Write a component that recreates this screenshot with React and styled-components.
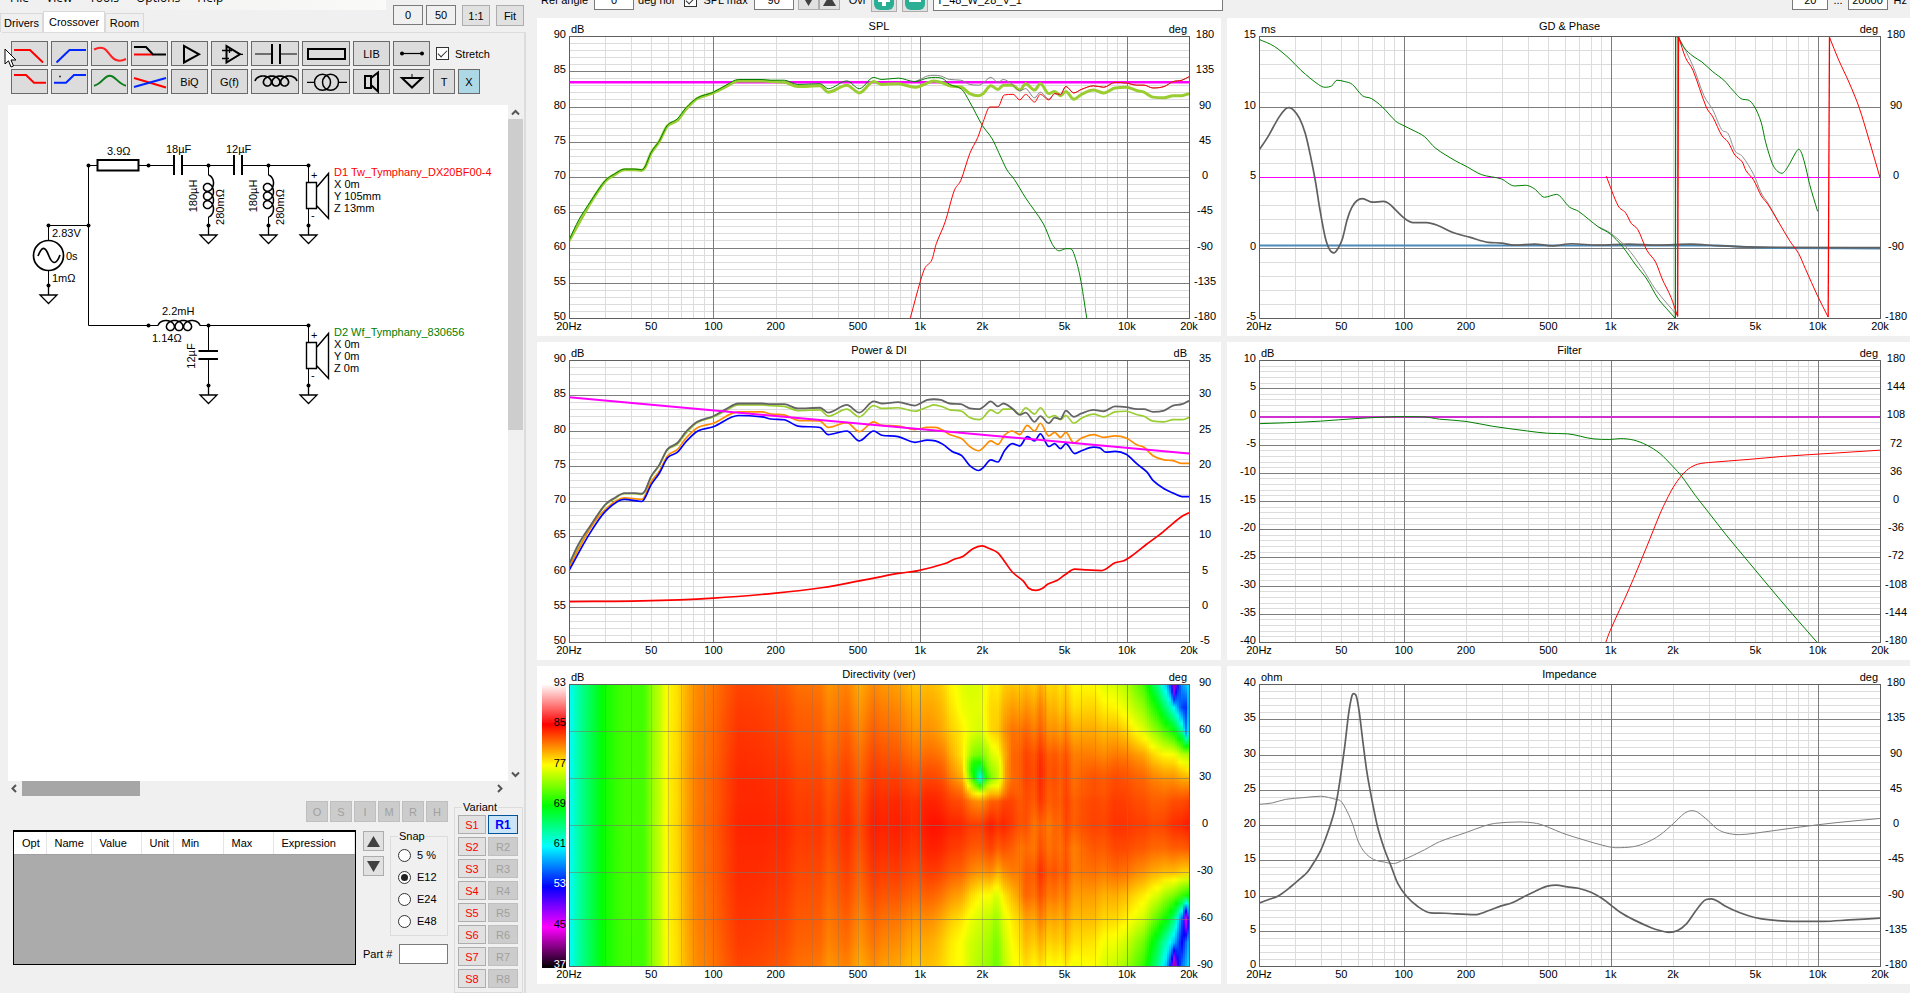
import React, { useLayoutEffect, useRef, useState } from "react";
import styled, { createGlobalStyle, css } from "styled-components";

/* ---------- base ---------- */

const Global = createGlobalStyle`
  * { box-sizing: border-box; }
  html, body { margin: 0; padding: 0; overflow: hidden; background: #f0f0f0; }
  body, button, input, table {
    font-family: "Liberation Sans", Arial, sans-serif;
    font-size: 11px;
    line-height: 12px;
    color: #000;
  }
  svg text { font-family: "Liberation Sans", Arial, sans-serif; font-size: 11px; }
`;

const AppShell = styled.div`
  display: grid;
  grid-template-columns: 526px minmax(0, 1fr);
  height: 100vh;
  min-height: 800px;
  background: #f0f0f0;
`;

const Field = styled.input`
  width: ${(p) => p.$w}px;
  height: ${(p) => p.$h || 20}px;
  padding: 0 2px;
  border: 1px solid #7a7a7a;
  border-radius: 0;
  background: ${(p) => p.$bg || "#fff"};
  text-align: ${(p) => p.$align || "left"};
  outline: none;
`;

const Check = styled.input`
  appearance: none;
  width: 13px;
  height: 13px;
  margin: 0;
  border: 1px solid #333;
  background: #fff;
  display: grid;
  place-items: center;
  &:checked::after {
    content: "";
    width: 8px;
    height: 4px;
    margin-top: -2px;
    border-left: 1px solid #333;
    border-bottom: 1px solid #333;
    transform: rotate(-45deg);
  }
`;

const PlainButton = styled.button`
  display: grid;
  place-items: center;
  width: ${(p) => p.$w}px;
  height: ${(p) => p.$h}px;
  padding: 0;
  border: 1px solid #adadad;
  border-radius: 0;
  background: #e1e1e1;
  color: ${(p) => p.$color || "#000"};
  &:disabled { background: #ccc; border-color: #bfbfbf; color: #a0a0a0; }
  ${(p) => p.$active && css`
    background: #cce4f7;
    border-color: #005499;
    font-weight: bold;
    font-size: 12px;
  `}
`;

/* ---------- sidebar header ---------- */

const Sidebar = styled.aside`
  position: relative;
  display: flex;
  flex-direction: column;
  min-height: 0;
`;

const SideHeader = styled.header`
  display: flex;
  justify-content: space-between;
  height: 32px;
  padding-right: 2px;
`;

const MenuBar = styled.nav`
  display: flex;
  align-items: center;
  gap: 17px;
  width: 386px;
  height: 24px;
  margin-top: -14px;
  padding-left: 10px;
  background: linear-gradient(to right, #f0f0f0 20%, #fafaf9);
  a {
    font-family: "Open Sans", "Noto Sans", sans-serif;
    font-size: 12px;
    color: #000;
    text-decoration: none;
  }
`;

const Tabs = styled.div`
  display: flex;
  align-items: flex-end;
  height: 22px;
`;

const Tab = styled.button`
  height: ${(p) => (p.$on ? 21 : 19)}px;
  width: ${(p) => p.$w}px;
  padding: 0;
  border: 1px solid #d9d9d9;
  border-bottom: 0;
  background: ${(p) => (p.$on ? "#fff" : "#f0f0f0")};
`;

const ZoomBar = styled.div`
  display: flex;
  gap: 3px;
  padding-top: 5px;
  ${PlainButton} { margin-left: 3px; }
`;

const TabPage = styled.section`
  flex: 1;
  min-height: 0;
  display: flex;
  flex-direction: column;
  margin-left: 2px;
  border-top: 1px solid #dcdcdc;
  border-right: 2px solid #dcdcdc;
`;

/* ---------- toolbar ---------- */

const Toolbar = styled.div`
  display: flex;
  flex-direction: column;
  gap: 3px;
  padding: 8px 0 11px 9px;
`;

const ToolRow = styled.div`
  display: flex;
  gap: 3px;
  align-items: center;
`;

const Tool = styled.button`
  display: grid;
  place-items: center;
  width: ${(p) => p.$w || 37}px;
  height: 25px;
  padding: 0;
  border: 1px solid #6a6a6a;
  border-radius: 0;
  background: ${(p) => p.$bg || "#dcdcdc"};
  svg { display: block; margin: -1px; }
`;

const CheckLabel = styled.label`
  display: flex;
  align-items: center;
  gap: 6px;
  padding-left: 3px;
`;

/* ---------- workspace ---------- */

const Workspace = styled.div`
  flex: 1;
  min-height: 0;
  display: grid;
  grid-template: minmax(0, 1fr) 15px / minmax(0, 1fr) 15px;
  margin: 0 1px 0 6px;
`;

const Sheet = styled.div`
  overflow: hidden;
  background: #fff;
  svg { display: block; }
`;

const ScrollTrack = styled.div`
  display: flex;
  flex-direction: ${(p) => (p.$vertical ? "column" : "row")};
  justify-content: space-between;
  background: #f0f0f0;
`;

const ScrollEnd = styled.button`
  display: grid;
  place-items: center;
  width: 14px;
  height: 14px;
  padding: 0;
  border: 0;
  background: transparent;
`;

const Thumb = styled.div`
  width: ${(p) => (p.$vertical ? "15px" : "23.5%")};
  height: ${(p) => (p.$vertical ? "46%" : "15px")};
  margin-bottom: ${(p) => (p.$vertical ? "auto" : 0)};
  margin-right: ${(p) => (p.$vertical ? 0 : "auto")};
  background: ${(p) => (p.$vertical ? "#cdcdcd" : "#a6a6a6")};
`;

/* ---------- dock ---------- */

const Dock = styled.div`
  display: flex;
  gap: 6px;
  height: 197px;
  padding: 5px 1px 0 11px;
`;

const DockMain = styled.div`
  flex: 1;
  display: flex;
  flex-direction: column;
  gap: 8px;
`;

const JobRow = styled.div`
  display: flex;
  justify-content: flex-end;
  gap: 2px;
`;

const DockBody = styled.div`
  display: flex;
  gap: 7px;
`;

const TableFrame = styled.div`
  flex: 1;
  height: 135px;
  border: 1px solid #000;
  border-top-width: 2px;
  background: #ababab;
`;

const ParamTable = styled.table`
  width: 100%;
  border-collapse: collapse;
  table-layout: fixed;
  background: #fff;
  th {
    height: 22px;
    padding: 0 0 0 8px;
    text-align: left;
    font-weight: normal;
    border-right: 1px solid #e5e5e5;
    border-bottom: 1px solid #a0a0a0;
  }
`;

const DockSide = styled.div`
  width: 85px;
  display: flex;
  flex-direction: column;
  gap: 8px;
`;

const SideTop = styled.div`
  display: flex;
  justify-content: space-between;
`;

const Arrows = styled.div`
  display: flex;
  flex-direction: column;
  gap: 5px;
  padding-top: 1px;
`;

const Group = styled.fieldset`
  width: ${(p) => p.$w}px;
  min-width: 0;
  margin: 0;
  padding: ${(p) => p.$pad};
  border: 1px solid #dcdcdc;
  legend { padding: 0 1px; margin-left: ${(p) => p.$indent || 0}px; line-height: 12px; }
`;

const RadioRow = styled.label`
  display: flex;
  align-items: center;
  gap: 6px;
  height: 22px;
`;

const Radio = styled.input`
  appearance: none;
  width: 13px;
  height: 13px;
  margin: 0;
  border: 1px solid #333;
  border-radius: 50%;
  background: #fff;
  display: grid;
  place-items: center;
  &:checked::after {
    content: "";
    width: 7px;
    height: 7px;
    border-radius: 50%;
    background: #222;
  }
`;

const PartRow = styled.label`
  display: flex;
  align-items: center;
  justify-content: space-between;
`;

const VariantGrid = styled.div`
  display: grid;
  grid-template-columns: 28px 30px;
  gap: 3px 2px;
`;

/* ---------- main area ---------- */

const Main = styled.main`
  display: flex;
  flex-direction: column;
  min-height: 0;
  padding-left: 11px;
`;

const TopBar = styled.div`
  display: flex;
  align-items: center;
  gap: 4px;
  height: 20px;
  margin: -10px 3px 8px 4px;
  white-space: nowrap;
`;

const Label = styled.label`
  display: flex;
  align-items: center;
  gap: 6px;
`;

const Cluster = styled.div`
  display: flex;
  align-items: center;
  gap: ${(p) => p.$gap || 4}px;
  margin-left: ${(p) => (p.$end ? "auto" : `${p.$ml || 0}px`)};
`;

const Spinner = styled.div`
  display: flex;
`;

const ChartGrid = styled.div`
  flex: 1;
  min-height: 0;
  display: grid;
  grid-template-columns: repeat(2, minmax(0, 1fr));
  grid-template-rows: repeat(3, minmax(0, 1fr));
  gap: 6px;
  padding-bottom: 9px;
`;

const ChartPanel = styled.section`
  min-width: 0;
  min-height: 0;
  overflow: hidden;
  background: #fff;
  svg { display: block; }
`;

/* ---------- icons ---------- */

const Icon = ({ w = 37, children }) => (
  <svg width={w} height="25" viewBox={`0 0 ${w} 25`} fill="none" stroke="#000" strokeWidth="2">{children}</svg>
);

/* Prolate cycloid used for inductor windings, running left to right. */
function coil(x0, y0, length, pitch = 8.6, lift = 5) {
  const c = pitch / (2 * Math.PI);
  const r = (length - 7 * Math.PI * c) / 2;
  const pts = [];
  for (let i = 0; i <= 120; i++) {
    const a = -Math.PI / 2 + (i / 120) * 7 * Math.PI;
    const x = x0 + c * (a + Math.PI / 2) + r * (Math.sin(a) + 1);
    pts.push(`${x.toFixed(1)},${(y0 - lift * Math.cos(a)).toFixed(1)}`);
  }
  return "M" + pts.join("L");
}

const toolRows = [
  [
    { n: "Low pass", icon: <path d="M3 9H19L32 21.5" stroke="#f00" /> },
    { n: "High pass", icon: <path d="M5.5 21.5L18.5 9H35" stroke="#0026ff" /> },
    { n: "Shelf", icon: <path d="M3 8.5C8 6 12 5.500 15.500 9.500C20 15 22 19 27 19.500C30 20 33 19 35 18" stroke="#f22" /> },
    { n: "Split", icon: <><path d="M3 13.500H22" stroke="#f00" /><path d="M3 6H15L22 13.500H35" /></> },
    { n: "Buffer", icon: <path d="M13 5V21.500L28 13.300Z" /> },
    { n: "Op amp", icon: <><path d="M15.500 5V21.500L29 13.300Z" /><path d="M11 9.500H15M11 17.500H18M29 13.300H32M16 9.500H21M18.500 7V12" strokeWidth="1.300" /></> },
    { n: "Capacitor", w: 48, icon: <><path d="M4 13H21M29 13H46" strokeWidth="1" /><path d="M21 3V23M29 3V23" /></> },
    { n: "Resistor", w: 48, icon: <path d="M6 8H43V18H6Z" /> },
    { n: "LIB", text: true },
    { n: "Wire", icon: <><path d="M9 12.500H29" strokeWidth="1.200" /><circle cx="9" cy="12.500" r="2" fill="#000" stroke="none" /><circle cx="29" cy="12.500" r="2" fill="#000" stroke="none" /></> },
  ],
  [
    { n: "Low shelf", icon: <path d="M3 6H15L23 13.700H35" stroke="#f00" /> },
    { n: "High shelf", icon: <><path d="M3 13.700H15L23 6H35" stroke="#0026ff" /><circle cx="9" cy="7.500" r="1" fill="#333" stroke="none" /></> },
    { n: "Peak", icon: <path d="M3 16.700C11 15 13 6.700 18.700 6.700S27 15 35 16.700" stroke="#0c7d1a" /> },
    { n: "Cross", icon: <><path d="M3 9L35 18.500" stroke="#f00" /><path d="M3 18L35 9" stroke="#0026ff" /></> },
    { n: "BiQ", text: true },
    { n: "G(f)", text: true },
    { n: "Inductor", w: 48, icon: <path d={coil(4, 12, 42)} strokeWidth="1.700" /> },
    { n: "Transformer", w: 48, icon: <><circle cx="20.500" cy="13.300" r="8" strokeWidth="1.500" /><circle cx="28.500" cy="13.300" r="8" strokeWidth="1.500" /><path d="M5 13.300H12M37 13.300H45" strokeWidth="1.300" /></> },
    { n: "Speaker", icon: <path d="M12 7H18V19H12ZM18 9L25 3.500V22.500L18 16" /> },
    { n: "Ground", icon: <><path d="M9 9H29L19 18.500Z" /><path d="M19 5V9" strokeWidth="1" /></> },
    { n: "T", text: true, w: 22 },
    { n: "X", text: true, w: 22, bg: "#add8e6" },
  ],
];

const Chevron = ({ d }) => (
  <svg width="9" height="9" viewBox="0 0 9 9" fill="none" stroke="#555" strokeWidth="2"><path d={d} /></svg>
);

const Triangle = ({ up }) => (
  <svg width="13" height="11" viewBox="0 0 13 11"><path d={up ? "M6.500 0L13 11H0Z" : "M0 0H13L6.500 11Z"} fill="#404040" /></svg>
);

const Pointer = styled.svg`
  position: absolute;
  left: 4px;
  top: 48px;
`;

/* ---------- schematic ---------- */

const Dot = ({ x, y }) => <circle cx={x} cy={y} r="2" fill="#000" stroke="none" />;
const Ground = ({ x, y }) => (
  <>
    <Dot x={x} y={y} />
    <path d={`M${x} ${y}V${y + 9}M${x - 8.5} ${y + 9.5}H${x + 8.5}L${x} ${y + 18}Z`} strokeWidth="1.300" />
  </>
);
const SpeakerPart = ({ y, name, color, pos }) => (
  <>
    <Dot x={308.500} y={y} />
    <path d={`M308.500 ${y}V${y + 17}M308.500 ${y + 43}V${y + 60}`} />
    <path d={`M306.500 ${y + 17}H316.500V${y + 43}H306.500ZM316.500 ${y + 22}L328.500 ${y + 8}V${y + 53}L316.500 ${y + 40}`} strokeWidth="1.400" />
    <Ground x={308.500} y={y + 60} />
    <g fill="#000" stroke="none">
      <text x="311" y={y + 13}>+</text>
      <text x="311" y={y + 53}>-</text>
      <text x="334" y={y + 10} fill={color}>{name}</text>
      {pos.map((t, i) => <text key={t} x="334" y={y + 22 + i * 12}>{t}</text>)}
    </g>
  </>
);
const ShuntCoil = ({ x }) => (
  <>
    <path d={`M${x} 165.500V175M${x} 217V225.500`} />
    <path d={coil(175, -x, 42)} transform="rotate(90)" strokeWidth="1.500" />
    <Ground x={x} y={225.500} />
    <g fill="#000" stroke="none" textAnchor="middle">
      <text transform={`translate(${x - 11.5} 196) rotate(-90)`}>180µH</text>
      <text transform={`translate(${x + 15.5} 207) rotate(-90)`}>280mΩ</text>
    </g>
  </>
);

const Schematic = () => (
  <svg width="500" height="340" viewBox="8 105 500 340" fill="none" stroke="#000" strokeWidth="1">
    <path d="M48.500 240V225.500H88.500M97.500 165.500H88.500V325.500H158M138.500 165.500H174M182 165.500H234M242 165.500H308.500M200 325.500H308.500M208.500 325.500V351M208.500 359V385M48.500 271V285" />
    <path d="M97.500 160H138.500V170.500H97.500ZM174 155V175M182 155V175M234 155V175M242 155V175M198.500 351H218M198.500 359H218" strokeWidth="2" />
    <circle cx="48.500" cy="255.500" r="15" strokeWidth="1.700" />
    <path d="M38 256C42 246 45 246 48.500 255S56 266 60 255" strokeWidth="1.700" />
    <path d={coil(158, 325.500, 42)} strokeWidth="1.500" />
    {[[88.5, 165.5], [148.5, 165.5], [208.5, 165.5], [268.5, 165.5], [48.5, 225.5], [88.5, 225.5], [148.5, 325.5], [208.5, 325.5]].map(([x, y]) => <Dot key={x + "/" + y} x={x} y={y} />)}
    <ShuntCoil x={208.500} />
    <ShuntCoil x={268.500} />
    <Ground x={48.500} y={285.500} />
    <Ground x={208.500} y={385.500} />
    <SpeakerPart y={165.500} name="D1 Tw_Tymphany_DX20BF00-4" color="#f00" pos={["X 0m", "Y 105mm", "Z 13mm"]} />
    <SpeakerPart y={325.500} name="D2 Wf_Tymphany_830656" color="#008000" pos={["X 0m", "Y 0m", "Z 0m"]} />
    <g fill="#000" stroke="none">
      <text x="107" y="155">3.9Ω</text>
      <text x="166" y="153">18µF</text>
      <text x="226" y="153">12µF</text>
      <text x="52" y="237">2.83V</text>
      <text x="66" y="260">0s</text>
      <text x="52" y="282">1mΩ</text>
      <text x="162" y="315">2.2mH</text>
      <text x="152" y="342">1.14Ω</text>
      <text transform="translate(195 356) rotate(-90)" textAnchor="middle">12µF</text>
    </g>
  </svg>
);

/* ---------- chart data: alternating frequency, value (left axis) ---------- */

const GREEN = "20 61.1 22.3 64 25.3 66.5 29.8 69.5 33.2 70.5 37.1 71.2 41.6 71.2 44.8 71.1 46.6 71.5 50 73.6 54.7 75.2 59.8 77.4 66.8 78.3 73.7 79.9 83.5 81.3 99.8 82.1 115 83.1 132 83.9 172 83.9 190 83.8 220 83.8 256 83.2 328 83.3 359 82.6 442 83.7 508 82.6 596 84.2 652 83.9 784 84.1 943 83.6";
const GREEN_HI = " 1084 84.1 1185 84.2 1290 84 1390 83.2 1590 82.5 1739 80.7 2000 77.4 2230 75.5 2404 73.5 2629 71.1 2861 69.7 3240 67.1 3953 63.4 4367 60.5 4705 59.6 5070 59.9 5329 59.9 5546 59.2 5946 55.9 6407 50";
const SUM_MID = "943 83.6 1000 83.9 1084 84.4 1168 84.5 1258 84.4 1390 83.9 1574 83.8 1739 83.2 1921 83.1 2019 83.4 2197 84.2 2380 83.5 2526 83.9 2791 83.2 3037 82.3 3240 82.6 3579 81.3 3819 82.1 4197 81.1 4477 81.9 4777 81.7";
const SUM_HI = " 5070 82.9 5546 82 6036 82.5 6904 83 7740 82.8 8766 83.5 9927 83.4 11242 83.1 12113 83.1 13381 82.7 15153 82.9 16739 83.6 18491 83.8 20000 84.3";
const SUM = GREEN + SUM_MID.slice(8) + SUM_HI;
const TWEETER = "897 50.1 1005 55.4 1057 57.2 1139 58.3 1197 60.6 1322 63.7 1461 68.1 1574 69.6 1739 73.4 1902 75.7 2019 77.9 2175 80 2379 80 2551 81.7 2818 81.8 3037 81 3240 81.8 3579 80.7 3819 81.8 4197 81 4477 81.9 4777 81.8" + SUM_HI;
const LISTEN = "20 61 25.3 66.3 29.8 69.4 33.2 70.4 37.1 71.1 41.6 71.1 44.8 71 46.6 71.4 50 73.5 54.7 75.1 59.8 77.3 66.8 78.1 73.7 79.7 83.5 81.2 99.8 82 115 82.9 132 83.7 172 83.7 190 83.6 220 83.5 256 82.9 328 83 359 82.1 442 83.1 508 82 596 83.6 652 83.2 784 83.3 943 82.8 1084 83.4 1168 83.7 1290 83.4 1390 83 1590 82.8 1739 81.9 1921 81.6 2019 81.9 2197 83 2380 82.5 2526 83.1 2791 83.1 3037 82.4 3240 83.3 3579 82.4 3819 83.3 4197 81.9 4477 82.2 4777 81.6 5070 82.2 5546 81.1 6036 81.8 6904 82.4 7740 82 8766 82.7 9927 82.8 11242 82.3 12113 82.1 13381 81.4 15153 81.3 16739 81.6 18491 81.6 20000 81.9";
const EARLY = "20 60.6 25 65.9 30 68.9 37 70.5 45 70.3 50 72.8 54.7 74.3 60 76.5 67 77.4 73.7 79 84 80.5 100 81.1 132 82.7 172 82.7 190 82.4 220 82.3 256 81.5 328 81.4 359 80.5 442 81.2 508 79.9 596 81.3 652 80.8 784 80.7 943 80.2 1084 80.5 1185 80.5 1290 80.1 1390 79.5 1590 78.9 1739 77.8 1921 77.2 2019 77.6 2197 78.6 2380 78.1 2560 79.4 2791 80 3037 79.5 3300 80.8 3579 80 3819 81.1 4197 79.3 4477 79.8 4777 79.1 5070 79.8 5546 78.3 6036 79 6904 79.5 7740 79.1 8766 79.3 9927 79 11242 78 12113 77.7 13381 76.5 15153 75.9 16739 75.8 18491 75.4 20000 75.4";
const POWER = "20 60.2 25 65.3 30 68.6 37 70.3 45 70 50 72.4 54.7 74 60 76.2 67 77 73.7 78.5 84 80 100 80.6 132 82.2 172 82 190 81.7 220 81.6 256 80.7 328 80.5 359 79.5 442 80 508 78.6 596 80 652 79.4 784 79.2 943 78.4 1084 78.7 1185 78.6 1290 78.1 1430 77.1 1590 76.5 1739 75.1 1921 74.4 2019 74.8 2197 75.9 2380 75.6 2560 77.2 2791 78.2 3037 77.9 3300 79.2 3579 78.6 3819 79.6 4197 77.8 4477 78.2 4777 77.5 5070 78.2 5600 76.8 6036 77.2 6904 77.7 7400 77.6 7900 77 8766 77.1 9927 76.7 11242 75.3 12500 74.2 13381 73 15153 71.8 16739 71.2 18491 70.7 20000 70.7";
const DI = "20 55.8 45 55.9 100 56.3 200 57 340 57.8 500 58.7 784 59.8 980 60.2 1322 61.2 1461 61.8 1610 62.2 1800 63.3 1990 63.7 2175 63.3 2379 62.7 2590 61.3 2791 60 3160 58.7 3355 57.7 3632 57.4 3914 57.7 4155 58.3 4590 58.8 5020 59.6 5600 60.4 6400 60.3 7550 60.2 8766 61.3 9683 61.6 10696 62.4 12418 63.9 14417 65.3 16739 66.9 18300 67.8 20000 68.4";

const GD = "20 6.95 22 7.85 24.9 9.25 26.8 9.85 27.9 9.95 29.3 9.8 31.4 9.2 33.5 8.1 35.5 6.5 37.5 4.7 39.3 2.8 41.7 .8 43.8 -.1 46 -.35 48.3 0 50.7 .7 53.3 2 56 2.85 59.4 3.35 63.2 3.5 70.8 3.25 79.6 3.3 84.9 3.15 91.4 2.7 101 2.1 111 1.8 129 1.8 146 1.6 173 1.1 210 .75 256 .4 297 .35 343 .2 428 .28 520 .15 648 .3 871 .2 1227 .28 1700 .2 2437 .27 3270 .17 4608 .08 6818 .05 20000 .02";
const PH_LOW = "20 14.8 23.7 14.3 28.2 13.4 31.9 12.6 38.7 11.6 41.7 11.4 44.9 11.5 47.6 11.9 52 11.8 56.5 11.6 63.2 10.8 69.8 10.6 78.9 10 91.4 9 99.3 8.7 111 8.35 126 7.9 142 7.1 177 6.2 200 5.8 238 5.2 296 4.9 343 4.4 388 4.45 428 4.2 479 3.6 547 3.8 633 2.9 699 2.6 871 1.5";
const PH_WF1 = PH_LOW + " 994 1 1141 .1 1321 -1.2 1494 -2.2 1688 -3.55 1862 -4.3 2053 -5";
const PH_WF2 = "2104 15 2265 14.2 2498 13.6 2755 13.2 3114 12.5 3520 11.9 3882 11.2 4324 10.55 4608 10.5 4960 10 5337 8.9 5605 7.5 6032 6 6335 5.5 6718 5.3 6987 5.5 7337 6 7820 6.75 8093 7 8376 6.7 8796 5.6 9147 4.5 9990 2.6";
const PH_TW1 = "951 5.1 1086 3 1180 2.5 1257 1.75 1353 1.3 1494 -.15 1648 -1 1774 -2.2 1956 -3.5 2105 -4.85";
const PH_TW2 = "2126 15 2299 13.5 2498 12.6 2894 10 3114 9.3 3435 8 3697 7.5 3979 6.6 4325 6.1 4498 5.5 4912 4.8 5339 3.7 5746 3.1 6495 1.8 7337 .5 8093 -.4 8710 -1.45 9990 -3.4 11236 -4.9";
const PH_TW3 = "11402 14.95 12576 13.4 14214 11.7 15909 9.9 17720 7.65 20000 5";
const PH_SUM1 = "871 1.5 1000 1.05 1200 0 1422 -1.45 1648 -2.95 2105 -4.8";
const PH_SUM2 = "2126 15 2498 12.9 2823 10.8 3114 9.8 3435 8.4 3697 8.1 3979 6.9 4325 6.5 4912 5.2 5339 3.9 5746 3.2 6495 1.8";

const F_WF = "20 -1.2 26.8 -1.05 39.7 -.75 58.8 -.3 99.3 .05 125 0 149 -.4 200 -.8 268 -1.65 396 -2.5 495 -2.9 617 -3 829 -3.9 983 -4 1112 -3.85 1288 -4.1 1494 -5 1730 -6.5 2004 -8.85 2210 -10.6 2560 -13.9 2966 -16.9 3607 -20.9 4608 -25.6 5888 -30.3 7522 -34.9 9950 -40";
const F_TW = "946 -40 994 -37.9 1227 -30.5 1494 -23 1730 -17.2 1862 -14.7 2004 -12.5 2189 -10.5 2379 -9.2 2624 -8.4 2966 -8.1 4608 -7.55 6818 -7 12268 -6.4 20000 -5.9";

const IMP = "20 9 22.3 9.5 24.9 10.05 28.2 11.2 31.9 12.55 34.3 13.4 36.9 14.8 39.7 16.45 42.7 18.8 46 21.75 47.8 24.1 49.5 26.9 52 31.4 54.1 35.7 56 38.2 57.3 38.7 58.7 38.5 60.8 36.4 63.2 32.4 66.4 27.6 70.5 23.4 75.1 19.6 80.8 16.6 87 14.2 93.6 11.8 103 10 117 8.5 135 7.6 158 7.55 221 7.35 256 7.9 296 8.6 334 9.05 396 10.15 448 10.9 495 11.4 546 11.55 617 11.3 698 11.1 808 10.5 914 9.6 1112 7.7 1288 6.65 1569 5.5 1730 5.1 1909 4.85 2105 5.1 2322 6.05 2499 7.35 2756 9 2894 9.5 3070 9.6 3270 9.3 3607 8.5 4178 7.65 4960 6.95 5888 6.6 7522 6.4 10600 6.4 14222 6.6 20000 6.85";
const IMP_PH = "20 23 23.2 23.2 26.8 23.7 32.7 23.95 39.7 24.15 47.2 23.7 49.5 23.5 53.3 22 56.8 20.1 60.2 17.8 64.8 16.2 71.5 15.2 80.8 14.8 89.2 14.6 99.3 15.1 126 16.55 149 17.7 200 19 243 19.9 275 20.3 361 20.5 438 20.3 495 19.8 587 18.9 752 17.9 914 17.2 1059 16.85 1288 17 1494 17.6 1730 18.65 2004 20.25 2266 21.7 2463 22.1 2625 21.9 2967 20.65 3270 19.5 3607 18.95 4178 18.7 4960 18.9 8295 19.8 12276 20.4 20000 21";

const parse = (s) => {
  const n = s.trim().split(/\s+/).map(Number);
  const out = [];
  for (let i = 0; i < n.length; i += 2) out.push([n[i], n[i + 1]]);
  return out;
};

const logPos = (f) => Math.log10(f / 20) / 3;

/* Cubic path through pixel points; tangents are limited so it never overshoots. */
function smooth(p) {
  const n = p.length;
  if (n < 3) return "M" + p.map((q) => q.join(",")).join("L");
  const d = [];
  for (let i = 0; i < n - 1; i++) d.push((p[i + 1][1] - p[i][1]) / (p[i + 1][0] - p[i][0]));
  const m = [d[0]];
  for (let i = 1; i < n - 1; i++) {
    const slope = (p[i + 1][1] - p[i - 1][1]) / (p[i + 1][0] - p[i - 1][0]);
    const limit = 2.5 * Math.min(Math.abs(d[i - 1]), Math.abs(d[i]));
    m.push(d[i - 1] * d[i] <= 0 ? 0 : Math.sign(slope) * Math.min(Math.abs(slope), limit));
  }
  m.push(d[n - 2]);
  let s = `M${p[0][0].toFixed(2)},${p[0][1].toFixed(2)}`;
  for (let i = 0; i < n - 1; i++) {
    const h = (p[i + 1][0] - p[i][0]) / 3;
    s += `C${(p[i][0] + h).toFixed(2)},${(p[i][1] + m[i] * h).toFixed(2)} ${(p[i + 1][0] - h).toFixed(2)},${(p[i + 1][1] - m[i + 1] * h).toFixed(2)} ${p[i + 1][0].toFixed(2)},${p[i + 1][1].toFixed(2)}`;
  }
  return s;
}

/* ---------- directivity map ---------- */

/* Attenuation relative to the on-axis response, per vertical angle. */
const ATTEN = [
  [90, "20 0 60 .2 100 .8 150 1.1 300 1.9 500 3 700 3.8 1000 5 1300 6 1600 7.7 1950 7.2 2400 6 2800 4.3 3200 3.5 3800 2.5 4500 3.5 5500 5 7000 6 8500 7.5 10000 9 12000 12 14000 18 15500 24 16400 30 16900 42 17500 31 18500 26 20000 24"],
  [75, "20 0 60 .2 100 .6 150 .8 300 1.4 500 2.4 700 3 1000 4.2 1300 5.3 1600 7.2 1950 7 2400 5.200 2800 3 3200 2.2 3800 1 4500 2.5 5500 4 7000 4.7 8500 6 10000 7.300 12000 9.500 14000 13.500 15500 18 17000 23 18200 28 19300 30 20000 24"],
  [60, "20 0 60 .1 100 .4 150 .6 300 1.1 500 1.8 700 2.3 1000 3.5 1300 4.700 1600 6.3 1950 7.5 2100 6.5 2400 4.7 2800 1.7 3200 .7 3800 0 4500 1.3 5500 2.5 7000 3.3 8500 4 10000 5 12000 7 14000 9.500 15500 12 17000 15 18500 20 19300 27 20000 23"],
  [45, "20 0 60 .1 100 .3 150 .4 300 .8 500 1.2 700 1.6 1000 2.5 1300 3.3 1600 6 1800 10 1950 10.5 2100 9.5 2400 6.500 2800 1.3 3200 -.2 3800 -1.4 4500 -.4 5500 1 7000 2 8500 2.3 10000 2.5 12000 3.3 14000 5 15500 6 17000 7 18500 9 20000 10"],
  [37, "20 0 60 0 100 .2 150 .3 300 .6 500 .9 700 1.2 1000 1.8 1300 2.5 1600 5.200 1800 15 1950 15.5 2100 11 2400 8 2600 3.500 2800 1.3 3200 -.3 3800 -1.7 4500 -.7 5500 .7 7000 1.1 10000 1.5 12000 2 14000 3.2 17000 4.7 20000 7.200"],
  [30, "20 0 60 0 100 .1 150 .2 300 .5 500 .7 700 .9 1000 1.3 1300 2 1600 4.3 1800 13 1950 22 2100 13 2400 8 2600 3.500 2800 1.4 3200 -.3 3800 -1.7 4500 -.7 5500 .5 7000 .5 10000 1 12000 1.3 14000 2 17000 3.3 20000 5"],
  [22, "20 0 100 .1 300 .3 500 .5 1000 .8 1300 1.2 1600 2.5 1800 6.5 1950 8 2100 6.5 2400 5.5 2700 1.5 3200 0 3800 -1.500 4500 -.5 5500 .4 10000 .7 14000 1.2 20000 2.800"],
  [15, "20 0 300 .2 500 .3 1000 .3 1600 1.2 1800 2.3 1950 2.7 2100 2.5 2400 1.4 2800 .3 3200 0 3800 -1.3 4500 -.5 5500 0 10000 .4 14000 .7 20000 1.3"],
  [0, "20 0 20000 0"],
  [-15, "20 0 300 .2 500 .3 1000 .4 1600 .8 1950 1 2400 1.5 2800 1.2 3200 1 3800 -.5 4500 0 5500 1 7000 .7 10000 .7 14000 1 20000 2"],
  [-30, "20 0 100 .1 300 .5 500 .7 1000 1.1 1600 1.9 1950 2.8 2400 4 2800 2 3200 .5 3800 -1.5 4500 -.6 5500 1 7000 1.5 10000 2 14000 3.2 17000 4.5 20000 6"],
  [-45, "20 0 60 .1 100 .3 150 .4 300 .8 500 1.2 1000 2.1 1600 4 1950 6 2300 8 2500 6.5 2800 4 3200 .8 3800 -.5 4500 .5 5500 2 7000 3 10000 4.4 12000 5.5 14000 7 17000 11 20000 15"],
  [-60, "20 0 60 .1 100 .4 150 .6 300 1.1 500 1.8 1000 3.3 1600 6 1950 7.5 2300 10 2500 8 2800 5.5 3200 2.7 3800 1 4500 2 5500 3 7000 4 10000 6 12000 7.500 14000 11 15500 14 17000 19 18500 28 19300 41 20000 29"],
  [-75, "20 0 60 .2 100 .6 150 .8 300 1.4 500 2.3 1000 4.2 1600 7 1950 8.3 2300 11 2500 9 2800 6 3200 3.5 3800 2.5 5500 4 7000 5.3 10000 8 12000 10.5 14000 15.5 15500 20 17000 25 18500 31 20000 25"],
  [-90, "20 0 60 .2 100 .8 150 1.1 300 1.9 500 3 1000 5 1600 7 1950 8.8 2300 11.5 2500 9.5 2800 6.5 3200 4.5 3800 4 5500 5.5 7000 6 10000 9.5 12000 12.5 14000 18 15500 24 16400 31 16900 42 17500 32 18500 27 20000 24"],
].map(([a, s]) => [a, parse(s)]);

const ON_AXIS = parse(SUM);

function sample(points, f) {
  let i = 1;
  while (i < points.length - 1 && points[i][0] < f) i++;
  const [f0, v0] = points[i - 1];
  const [f1, v1] = points[i];
  const t = Math.min(1, Math.max(0, Math.log(f / f0) / Math.log(f1 / f0)));
  return v0 + (v1 - v0) * t;
}

const SCALE = [[93, 255, 255, 255], [85, 255, 0, 0], [77, 255, 255, 0], [69, 0, 255, 0], [61, 0, 255, 255], [53, 0, 0, 255], [45, 255, 0, 255], [37, 0, 0, 0]];

function heat(v) {
  const x = Math.min(93, Math.max(37, v));
  let i = 0;
  while (i < SCALE.length - 2 && x < SCALE[i + 1][0]) i++;
  const t = (SCALE[i][0] - x) / 8;
  return `rgb(${[1, 2, 3].map((k) => Math.round(SCALE[i][k] + (SCALE[i + 1][k] - SCALE[i][k]) * t)).join(",")})`;
}

const COLS = 310;
const HEAT_COLUMNS = Array.from({ length: COLS }, (_, c) => {
  const f = 20 * Math.pow(10, (3 * (c + 0.5)) / COLS);
  const base = sample(ON_AXIS, f);
  const rows = ATTEN.map(([a, pts]) => [a, base - sample(pts, f)]);
  const stops = [];
  for (let a = 90; a >= -90; a -= 5) {
    let i = 0;
    while (i < rows.length - 2 && a < rows[i + 1][0]) i++;
    const t = (rows[i][0] - a) / (rows[i][0] - rows[i + 1][0]);
    stops.push([(90 - a) / 180, heat(rows[i][1] + (rows[i + 1][1] - rows[i][1]) * t)]);
  }
  return stops;
});

const HeatMap = ({ x, y, w, h }) => (
  <g shapeRendering="crispEdges">
    <defs>
      {HEAT_COLUMNS.map((stops, c) => (
        <linearGradient key={c} id={`hc${c}`} x1="0" y1="0" x2="0" y2="1">
          {stops.map(([o, color]) => <stop key={o} offset={o} stopColor={color} />)}
        </linearGradient>
      ))}
      <linearGradient id="legend" x1="0" y1="0" x2="0" y2="1">
        {SCALE.map(([v]) => <stop key={v} offset={(93 - v) / 56} stopColor={heat(v)} />)}
      </linearGradient>
    </defs>
    {HEAT_COLUMNS.map((_, c) => {
      const a = Math.round(x + (w * c) / COLS);
      const b = Math.round(x + (w * (c + 1)) / COLS);
      return <rect key={c} x={a} y={y} width={b - a} height={h} fill={`url(#hc${c})`} />;
    })}
    <rect x="5" y={y} width="24" height={h + 2} fill="url(#legend)" />
  </g>
);

/* ---------- chart ---------- */

const X_TICKS = [[20, "20Hz"], [50, "50"], [100, "100"], [200, "200"], [500, "500"], [1000, "1k"], [2000, "2k"], [5000, "5k"], [10000, "10k"], [20000, "20k"]];
const X_LINES = [];
[10, 100, 1000, 10000].forEach((d) => {
  for (let k = 1; k < 10; k++) if (d * k > 20 && d * k < 20000) X_LINES.push(d * k);
});

function Chart({ title, max, min, minor, left, right, units, curves = [], map, inset = [32, 32] }) {
  const ref = useRef(null);
  const [size, setSize] = useState([684, 318]);
  useLayoutEffect(() => {
    const measure = () => {
      const r = ref.current.getBoundingClientRect();
      setSize([Math.round(r.width), Math.floor(r.height)]);
    };
    measure();
    const ro = new ResizeObserver(measure);
    ro.observe(ref.current);
    return () => ro.disconnect();
  }, []);
  const [W, H] = size;
  const x0 = inset[0];
  const x1 = W - inset[1];
  const y0 = 18;
  const y1 = H - 18;
  const px = (f) => x0 + (x1 - x0) * logPos(f);
  const py = (v) => y0 + ((y1 - y0) * (max - v)) / (max - min);
  const snap = (v) => Math.round(v) + 0.5;
  const minors = [];
  if (minor) for (let v = min + minor; v < max; v += minor) minors.push(v);
  const spread = (list) => list.map((t, i) => [t, y0 + ((y1 - y0) * i) / (list.length - 1)]);
  const clipId = "clip-" + title.replace(/\W/g, "");
  return (
    <ChartPanel ref={ref} aria-label={title}>
      <svg width={W} height={H}>
        <clipPath id={clipId}><rect x={x0} y={y0} width={x1 - x0} height={y1 - y0 + 1} /></clipPath>
        {map && <HeatMap x={x0} y={y0} w={x1 - x0} h={y1 - y0} />}
        <g fill="none" shapeRendering="crispEdges" stroke={map ? "rgba(120,120,110,.3)" : "#dcdcdc"}>
          {X_LINES.map((f) => <path key={f} d={`M${snap(px(f))} ${y0}V${y1}`} />)}
          {minors.map((v) => <path key={v} d={`M${x0} ${snap(py(v))}H${x1}`} />)}
        </g>
        <g fill="none" shapeRendering="crispEdges" stroke={map ? "rgba(120,120,110,.6)" : "#7d7d7d"}>
          {[100, 1000, 10000].map((f) => <path key={f} d={`M${snap(px(f))} ${y0}V${y1}`} />)}
          {spread(map ? right : left).map(([t, y]) => <path key={t} d={`M${x0} ${snap(y)}H${x1}`} />)}
        </g>
        <g fill="none" clipPath={`url(#${clipId})`} strokeLinejoin="round">
          {curves.map(([data, color, width = 1, sharp], i) => {
            const pts = parse(data).map(([f, v]) => [px(f), py(v) + 0.5]);
            return <path key={i} d={sharp ? "M" + pts.map((p) => p.join(",")).join("L") : smooth(pts)} stroke={color} strokeWidth={width} />;
          })}
        </g>
        <rect x={x0 + 0.5} y={y0 + 0.5} width={x1 - x0} height={y1 - y0} fill="none" stroke="#606060" shapeRendering="crispEdges" />
        <g fill="#000">
          <text x={(x0 + x1) / 2} y="12" textAnchor="middle">{title}</text>
          <text x={x0 + 2} y={y0 - 3}>{units[0]}</text>
          <text x={x1 - 2} y={y0 - 3} textAnchor="end">{units[1]}</text>
          {spread(left).map(([t, y]) => <text key={t} x={x0 - 3} y={Math.round(y) + 2} textAnchor="end" fill={t === "53" || (map && t === "37") ? "#fff" : "#000"}>{t}</text>)}
          {spread(right).map(([t, y]) => <text key={t} x={x1 + 16} y={Math.round(y) + 2} textAnchor="middle">{t}</text>)}
          {X_TICKS.map(([f, t]) => <text key={t} x={px(f)} y={y1 + 12} textAnchor="middle">{t}</text>)}
        </g>
      </svg>
    </ChartPanel>
  );
}

const L = (s) => s.split(" ");
const PHASE8 = L("180 135 90 45 0 -45 -90 -135 -180");

/* ---------- app ---------- */

const tableCols = [["Opt", 32], ["Name", 45], ["Value", 50], ["Unit", 32], ["Min", 50], ["Max", 50], ["Expression", null]];

export default function App() {
  return (
    <>
      <Global />
      <AppShell>
        <Sidebar>
          <SideHeader>
            <div>
              <MenuBar>
                {["File", "View", "Tools", "Options", "Help"].map((m) => <a key={m} href="#menu">{m}</a>)}
              </MenuBar>
              <Tabs>
                <Tab $w={43}>Drivers</Tab>
                <Tab $w={62} $on>Crossover</Tab>
                <Tab $w={39}>Room</Tab>
              </Tabs>
            </div>
            <ZoomBar>
              <Field $w={30} $bg="#f0f0f0" $align="center" defaultValue="0" aria-label="Position" />
              <Field $w={30} $bg="#f0f0f0" $align="center" defaultValue="50" aria-label="Zoom" />
              <PlainButton $w={28} $h={21}>1:1</PlainButton>
              <PlainButton $w={28} $h={21}>Fit</PlainButton>
            </ZoomBar>
          </SideHeader>

          <TabPage>
            <Toolbar>
              {toolRows.map((row, i) => (
                <ToolRow key={i}>
                  {row.map((t) => (
                    <Tool key={t.n} $w={t.w} $bg={t.bg} title={t.n}>
                      {t.text ? t.n : <Icon w={t.w}>{t.icon}</Icon>}
                    </Tool>
                  ))}
                  {i === 0 && <CheckLabel><Check type="checkbox" defaultChecked />Stretch</CheckLabel>}
                </ToolRow>
              ))}
            </Toolbar>

            <Workspace>
              <Sheet><Schematic /></Sheet>
              <ScrollTrack $vertical>
                <ScrollEnd aria-label="Scroll up"><Chevron d="M1 6.500L4.500 3L8 6.500" /></ScrollEnd>
                <Thumb $vertical />
                <ScrollEnd aria-label="Scroll down"><Chevron d="M1 2.500L4.500 6L8 2.500" /></ScrollEnd>
              </ScrollTrack>
              <ScrollTrack>
                <ScrollEnd aria-label="Scroll left"><Chevron d="M5 1L1.500 4.500L5 8" /></ScrollEnd>
                <Thumb />
                <ScrollEnd aria-label="Scroll right"><Chevron d="M1 1L4.500 4.500L1 8" /></ScrollEnd>
              </ScrollTrack>
            </Workspace>

            <Dock>
              <DockMain>
                <JobRow>
                  {L("O S I M R H").map((c) => <PlainButton key={c} $w={22} $h={21} disabled>{c}</PlainButton>)}
                </JobRow>
                <DockBody>
                  <TableFrame>
                    <ParamTable>
                      <colgroup>{tableCols.map(([c, w]) => <col key={c} width={w || undefined} />)}</colgroup>
                      <thead><tr>{tableCols.map(([c]) => <th key={c} scope="col">{c}</th>)}</tr></thead>
                    </ParamTable>
                  </TableFrame>
                  <DockSide>
                    <SideTop>
                      <Arrows>
                        <PlainButton $w={21} $h={20} aria-label="Step up"><Triangle up /></PlainButton>
                        <PlainButton $w={21} $h={20} aria-label="Step down"><Triangle /></PlainButton>
                      </Arrows>
                      <Group $w={58} $pad="2px 0 3px 7px">
                        <legend>Snap</legend>
                        {["5 %", "E12", "E24", "E48"].map((s) => (
                          <RadioRow key={s}><Radio type="radio" name="snap" defaultChecked={s === "E12"} />{s}</RadioRow>
                        ))}
                      </Group>
                    </SideTop>
                    <PartRow>Part #<Field $w={49} /></PartRow>
                  </DockSide>
                </DockBody>
              </DockMain>
              <Group $w={69} $pad="2px 3px" $indent={4}>
                <legend>Variant</legend>
                <VariantGrid>
                  {[1, 2, 3, 4, 5, 6, 7, 8].map((n) => (
                    <React.Fragment key={n}>
                      <PlainButton $w={28} $h={19} $color="#f00">S{n}</PlainButton>
                      <PlainButton $w={30} $h={19} $color="#00f" $active={n === 1} disabled={n > 1}>R{n}</PlainButton>
                    </React.Fragment>
                  ))}
                </VariantGrid>
              </Group>
            </Dock>
          </TabPage>

          <Pointer width="14" height="21" viewBox="0 0 14 21">
            <path d="M1 1V16L4.500 12.800L7 19L9.500 18L7 12H12Z" fill="#fff" stroke="#000" />
          </Pointer>
        </Sidebar>

        <Main>
          <TopBar>
            <Label>Ref angle<Field $w={40} $align="center" defaultValue="0" /></Label>
            <span>deg hor</span>
            <Cluster $ml={5}>
              <Label><Check type="checkbox" defaultChecked />SPL max</Label>
            </Cluster>
            <Cluster $ml={2}>
              <Field $w={40} $align="center" defaultValue="90" aria-label="SPL max" />
              <Spinner>
                <PlainButton $w={21} $h={19} aria-label="Decrease"><Triangle /></PlainButton>
                <PlainButton $w={21} $h={19} aria-label="Increase"><Triangle up /></PlainButton>
              </Spinner>
            </Cluster>
            <Cluster $ml={5} $gap={5}>
              <span>Ovr</span>
              <PlainButton $w={26} $h={23} aria-label="Add overlay">
                <svg width="20" height="20" viewBox="0 0 20 20"><rect width="20" height="20" rx="6" fill="#2aae94" /><path d="M10 4V16M4 10H16" stroke="#fff" strokeWidth="4" /></svg>
              </PlainButton>
              <PlainButton $w={26} $h={23} aria-label="Remove overlay">
                <svg width="20" height="20" viewBox="0 0 20 20"><rect width="20" height="20" rx="6" fill="#2aae94" /><path d="M4 10H16" stroke="#fff" strokeWidth="4" /></svg>
              </PlainButton>
              <Field $w={290} $h={22} defaultValue="T_48_W_28_V_1" aria-label="Overlay name" />
            </Cluster>
            <Cluster $end $gap={5}>
              <Field $w={36} $align="center" defaultValue="20" aria-label="Lowest frequency" />
              <span>...</span>
              <Label><Field $w={40} $align="center" defaultValue="20000" aria-label="Highest frequency" />Hz</Label>
            </Cluster>
          </TopBar>

          <ChartGrid>
            <Chart title="SPL" max={90} min={50} minor={1} units={["dB", "deg"]}
              left={L("90 85 80 75 70 65 60 55 50")} right={PHASE8}
              curves={[["20 83.5 20000 83.5", "#f0f", 2.5], [LISTEN, "#9acd32", 3], [SUM_MID + SUM_HI, "#808080"], [GREEN + GREEN_HI, "#008000"], [TWEETER, "#f00"]]} />
            <Chart title="GD & Phase" max={15} min={-5} minor={1} units={["ms", "deg"]} inset={[32, 31]}
              left={L("15 10 5 0 -5")} right={L("180 90 0 -90 -180")}
              curves={[["20 5 20000 5", "#f0f", 1], ["20 .17 3000 .17 6000 0 20000 -.03", "#4c8ab8", 2], [GD, "#606060", 1.7],
                [PH_SUM1, "#909090"], [PH_SUM2, "#909090"], ["2105 -4.8 2106 15", "#909090", 1, true],
                [PH_WF1, "#008000"], [PH_WF2, "#008000"], ["2053 -5 2060 15 2104 15", "#008000", 1.3, true],
                [PH_TW1, "#f00"], [PH_TW2, "#f00"], [PH_TW3, "#f00"], ["2105 -4.85 2126 15", "#f00", 1.3, true], ["11236 -4.9 11402 14.95", "#f00", 1.3, true]]} />
            <Chart title="Power & DI" max={90} min={50} minor={1} units={["dB", "dB"]}
              left={L("90 85 80 75 70 65 60 55 50")} right={L("35 30 25 20 15 10 5 0 -5")}
              curves={[[LISTEN, "#9acd32", 1.7], [EARLY, "#ff8c00", 1.7], [POWER, "#00f", 1.7], [SUM, "#646464", 1.8], [DI, "#f00", 1.7], ["20 84.8 20000 76.8", "#f0f", 2]]} />
            <Chart title="Filter" max={10} min={-40} minor={1} units={["dB", "deg"]} inset={[32, 31]}
              left={L("10 5 0 -5 -10 -15 -20 -25 -30 -35 -40")} right={L("180 144 108 72 36 0 -36 -72 -108 -144 -180")}
              curves={[["20 0 20000 0", "#d030d0", 2], [F_WF, "#008000"], [F_TW, "#f00"]]} />
            <Chart title="Directivity (ver)" max={90} min={-90} units={["dB", "deg"]} map
              left={L("93 85 77 69 61 53 45 37")} right={L("90 60 30 0 -30 -60 -90")} />
            <Chart title="Impedance" max={40} min={0} minor={1} units={["ohm", "deg"]} inset={[32, 31]}
              left={L("40 35 30 25 20 15 10 5 0")} right={PHASE8}
              curves={[[IMP_PH, "#808080"], [IMP, "#606060", 1.7]]} />
          </ChartGrid>
        </Main>
      </AppShell>
    </>
  );
}
